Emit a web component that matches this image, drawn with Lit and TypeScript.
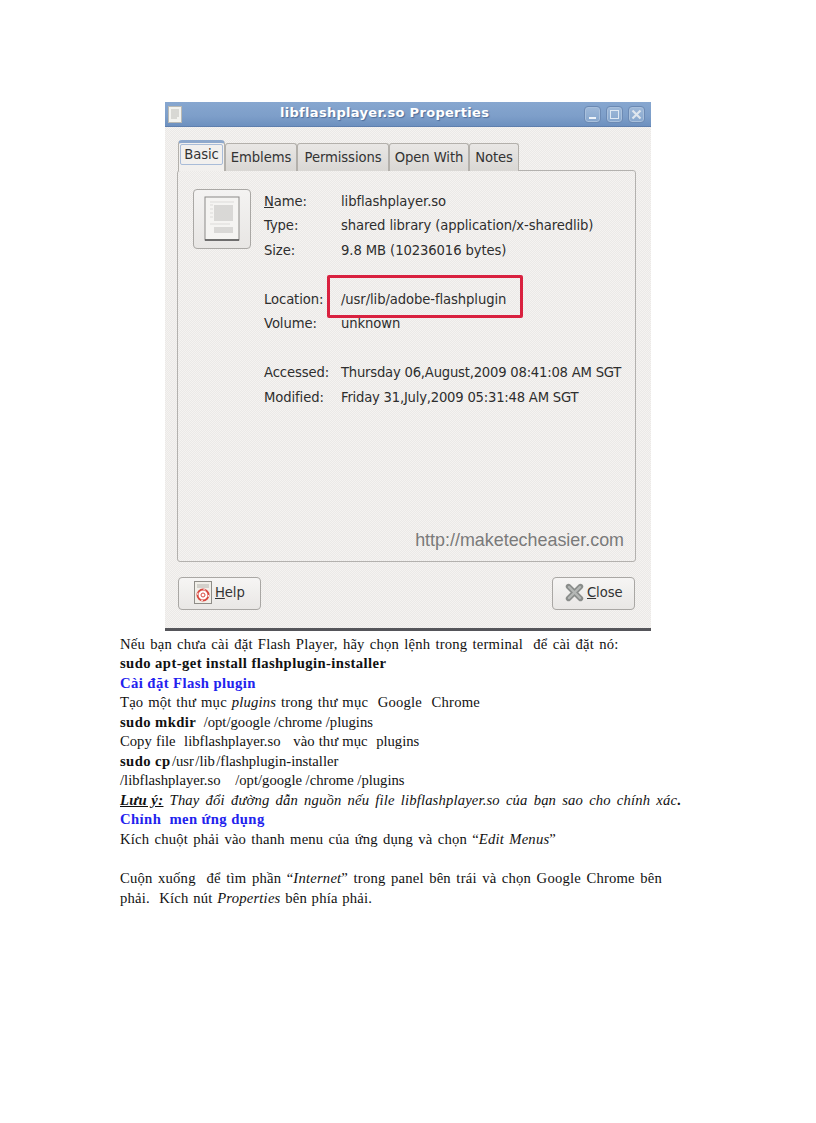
import { LitElement, html, css } from "lit";
import { customElement } from "lit/decorators.js";

const rows = [
  { k: html`<u>N</u>ame:`, v: "libflashplayer.so" },
  { k: "Type:", v: "shared library (application/x-sharedlib)" },
  { k: "Size:", v: "9.8 MB (10236016 bytes)" },
  null,
  { k: "Location:", v: "/usr/lib/adobe-flashplugin" },
  { k: "Volume:", v: "unknown" },
  null,
  { k: "Accessed:", v: "Thursday 06,August,2009 08:41:08 AM SGT", tight: true },
  { k: "Modified:", v: "Friday 31,July,2009 05:31:48 AM SGT", tight: true },
];

const docLines = [
  { t: html`Nếu bạn chưa cài đặt Flash Player, hãy chọn lệnh trong terminal  để cài đặt nó:`, ws: 1.3, ls: 0.2 },
  { t: html`<b>sudo apt-get install flashplugin-installer</b>`, ws: 0, ls: 0 },
  { t: html`<b class="blue">Cài đặt Flash plugin</b>`, ws: 0, ls: 0 },
  { t: html`Tạo một thư mục <i>plugins</i> trong thư mục  Google  Chrome`, ws: 0.9, ls: 0.2 },
  { t: html`<b>sudo mkdir</b>  /opt/google /chrome /plugins`, ws: 0, ls: 0 },
  { t: html`Copy file  libflashplayer.so   vào thư mục  plugins`, ws: 0.6, ls: 0 },
  { t: html`<b>sudo cp</b> /usr /lib /flashplugin-installer`, ws: -2.3, ls: 0 },
  { t: html`/libflashplayer.so    /opt/google /chrome /plugins`, ws: 0, ls: 0 },
  { t: html`<b><i><u>Lưu ý:</u></i></b><i> Thay đổi đường dẫn nguồn nếu file libflashplayer.so của bạn sao cho chính xác</i><b>.</b>`, ws: 2.3, ls: 0.15 },
  { t: html`<b class="blue">Chỉnh  men ứng dụng</b>`, ws: 0, ls: 0 },
  { t: html`Kích chuột phải vào thanh menu của ứng dụng và chọn “<i>Edit Menus</i>”`, ws: 1.3, ls: 0.2 },
  { t: html` `, ws: 0, ls: 0 },
  { t: html`Cuộn xuống  để tìm phần “<i>Internet</i>” trong panel bên trái và chọn Google Chrome bên`, ws: 1.6, ls: 0.2 },
  { t: html`phải.  Kích nút <i>Properties</i> bên phía phải.`, ws: 0.8, ls: 0.2 },
];

@customElement("app-root")
export class AppRoot extends LitElement {
  static styles = css`
    :host { display: block; width: 816px; height: 1123px; background: #fff; overflow: hidden; }
    .page { padding: 102px 0 0 120px; }
    .win {
      width: 486px; height: 529px; margin-left: 45px; box-sizing: border-box;
      display: flex; flex-direction: column; position: relative;
      font-family: "DejaVu Sans", sans-serif; font-size: 13.2px; letter-spacing: -.1px; color: #2e2e2e;
      background-color: #f0eeec;
      background-image: conic-gradient(#f5f3f1 25%, #ebe9e7 0 50%, #f5f3f1 0 75%, #ebe9e7 0);
      background-size: 2px 2px;
      border-bottom: 3px solid #55555a;
    }
    .title {
      height: 25px; flex: none; display: flex; align-items: center; position: relative;
      background: linear-gradient(#87a7d0, #7d9ec9 60%, #6d90bf);
      border-bottom: 1px solid #5f7fae; box-sizing: border-box;
    }
    .title .ticon { margin-left: 3px; flex: none; }
    .title .tname {
      position: absolute; left: 115px; top: 3px; color: #fff; font-weight: bold; font-size: 13px;
      letter-spacing: .3px; text-shadow: 1px 1px 1px #4d6c99; white-space: pre;
    }
    .wbtns { margin-left: auto; margin-right: 6px; display: flex; gap: 5px; }
    .wbtn {
      width: 17px; height: 17px; box-sizing: border-box; border: 1px solid #6c8ab4; border-radius: 4px;
      background: linear-gradient(#9fb9d9, #86a6cd); display: flex; align-items: center; justify-content: center;
      box-shadow: inset 0 0 0 1px #a9c0dc;
    }
    .body { flex: 1; padding: 13px 15px 0 12px; display: flex; flex-direction: column; }
    .tabs { display: flex; height: 31px; padding-left: 1px; position: relative; z-index: 1; }
    .tab {
      box-sizing: border-box; height: 28px; margin-top: 3px; border: 1px solid #b3b0ab; border-bottom: none;
      border-radius: 3px 3px 0 0; background: linear-gradient(#e9e7e5, #d9d7d4);
      display: flex; align-items: center; justify-content: center; color: #333;
    }
    .tab.active {
      height: 31px; margin-top: 0; background: #f2f0ee; border-top: 3px solid #7b9bc7; border-color: #8ea8cc #b3b0ab transparent;
      border-radius: 4px 4px 0 0; position: relative;
    }
    .tab.active span { border: 1px solid #a9bcd8; border-radius: 2px; padding: 1px 3px; line-height: 17px; margin-top: -5px; }
    .panel {
      box-sizing: border-box; height: 392px; border: 1px solid #b3b1ae; border-radius: 3px; position: relative;
      padding: 18px 0 0 15px; display: flex; margin-top: -1px;
    }
    .fileicon {
      flex: none; width: 58px; height: 60px; box-sizing: border-box; border: 1px solid #aaa8a5; border-radius: 4px;
      background: linear-gradient(#f4f3f2, #e8e6e4); display: flex; align-items: center; justify-content: center;
    }
    .info {
      margin-left: 13px; display: grid; grid-template-columns: 77px auto; grid-auto-rows: 24.5px;
      align-content: start; align-items: center; white-space: nowrap; height: max-content;
    }
    .tight { letter-spacing: -.22px; }
    .gap { grid-column: 1 / 3; }
    .mark {
      position: absolute; right: 11px; bottom: 10px; font: 17.9px "Liberation Sans", sans-serif; letter-spacing: 0; color: #7a7a7a;
    }
    .redbox {
      position: absolute; left: 149px; top: 104px; width: 196px; height: 43px; box-sizing: border-box;
      border: 3px solid #d9213f; border-radius: 2px;
    }
    .btns { display: flex; justify-content: space-between; margin-top: 15px; padding: 0 1px; }
    .btn {
      box-sizing: border-box; height: 33px; border: 1px solid #a9a7a4; border-radius: 4px; padding-bottom: 2px;
      background: linear-gradient(#f6f5f4, #e9e7e5); display: flex; align-items: center; gap: 3px; color: #333;
    }
    .btn.help { width: 83px; padding-left: 15px; }
    .btn.close { width: 83px; padding-left: 12px; }
    .doc {
      font-family: "Liberation Serif", serif; font-size: 14.67px; line-height: 19.55px; color: #111;
      white-space: pre; margin-top: 3.5px;
    }
    .doc > div { height: 19.55px; }
    .doc b { letter-spacing: .42px; word-spacing: 0; }
    .blue { color: #2222ee; }
  `;

  render() {
    return html`<div class="page">
      <div class="win">
        <div class="title">
          <svg class="ticon" width="14" height="17" viewBox="0 0 14 17">
            <rect x=".5" y=".5" width="13" height="16" fill="#f3f3ef" stroke="#b9b9b4"/>
            <path d="M3 4h8M3 6h8M3 8h8M3 10h8M3 12h6" stroke="#bdbdb8"/>
          </svg>
          <span class="tname">libflashplayer.so Properties</span>
          <div class="wbtns">
            <div class="wbtn"><svg width="11" height="11" viewBox="0 0 11 11"><path d="M2 9h7" stroke="#eef3f9" stroke-width="2"/></svg></div>
            <div class="wbtn"><svg width="11" height="11" viewBox="0 0 11 11"><rect x="1.5" y="1.5" width="8" height="8" fill="none" stroke="#dfe8f3"/></svg></div>
            <div class="wbtn"><svg width="11" height="11" viewBox="0 0 11 11"><path d="M1.5 1.5l8 8M9.5 1.5l-8 8" stroke="#dfe6ee" stroke-width="2.2"/></svg></div>
          </div>
        </div>
        <div class="body">
          <div class="tabs">
            <div class="tab active" style="width:47px"><span>Basic</span></div>
            <div class="tab" style="width:72px">Emblems</div>
            <div class="tab" style="width:92px">Permissions</div>
            <div class="tab" style="width:80px">Open With</div>
            <div class="tab" style="width:50px">Notes</div>
          </div>
          <div class="panel">
            <div class="fileicon">
              <svg width="36" height="46" viewBox="0 0 36 46">
                <rect x="1" y="1" width="34" height="43" fill="#f5f4f2" stroke="#8b8a87"/>
                <path d="M1 44h34" stroke="#555" stroke-width="1.5"/>
                <rect x="10" y="9" width="19" height="16" fill="#d9d8d6"/>
                <path d="M6 6h24M6 9h3M6 13h3M6 17h3M6 21h3M6 28h20" stroke="#dcdbd9"/>
                <rect x="10" y="31" width="19" height="6" fill="#d9d8d6"/>
              </svg>
            </div>
            <div class="info">
              ${rows.map((r) => r
                ? html`<div>${r.k}</div><div class=${r.tight ? "tight" : ""}>${r.v}</div>`
                : html`<div class="gap"></div>`)}
            </div>
            <div class="redbox"></div>
            <div class="mark">http://maketecheasier.com</div>
          </div>
          <div class="btns">
            <div class="btn help">
              <svg width="18" height="23" viewBox="0 0 18 23">
                <rect x=".5" y=".5" width="17" height="22" fill="#f1efe9" stroke="#8f8d88"/>
                <path d="M3 4h12M3 6h12" stroke="#b5b3ad"/>
                <circle cx="9" cy="14" r="5.5" fill="#fff" stroke="#d9483f" stroke-width="2"/>
                <circle cx="9" cy="14" r="5.5" fill="none" stroke="#fff" stroke-width="1" stroke-dasharray="2 6.6"/>
                <circle cx="9" cy="14" r="2" fill="#fff" stroke="#d9483f"/>
              </svg>
              <span><u>H</u>elp</span>
            </div>
            <div class="btn close">
              <svg width="19" height="19" viewBox="0 0 19 19">
                <path d="M3.5 3.5l12 12M15.5 3.5l-12 12" stroke="#8a8d8b" stroke-width="5.4" stroke-linecap="round"/>
                <path d="M4 4l11 11M15 4L4 15" stroke="#b4b7b5" stroke-width="2.4" stroke-linecap="round"/>
              </svg>
              <span><u>C</u>lose</span>
            </div>
          </div>
        </div>
      </div>
      <div class="doc">${docLines.map((l) => html`<div style="word-spacing:${l.ws}px;letter-spacing:${l.ls}px">${l.t}</div>`)}</div>
    </div>`;
  }
}
